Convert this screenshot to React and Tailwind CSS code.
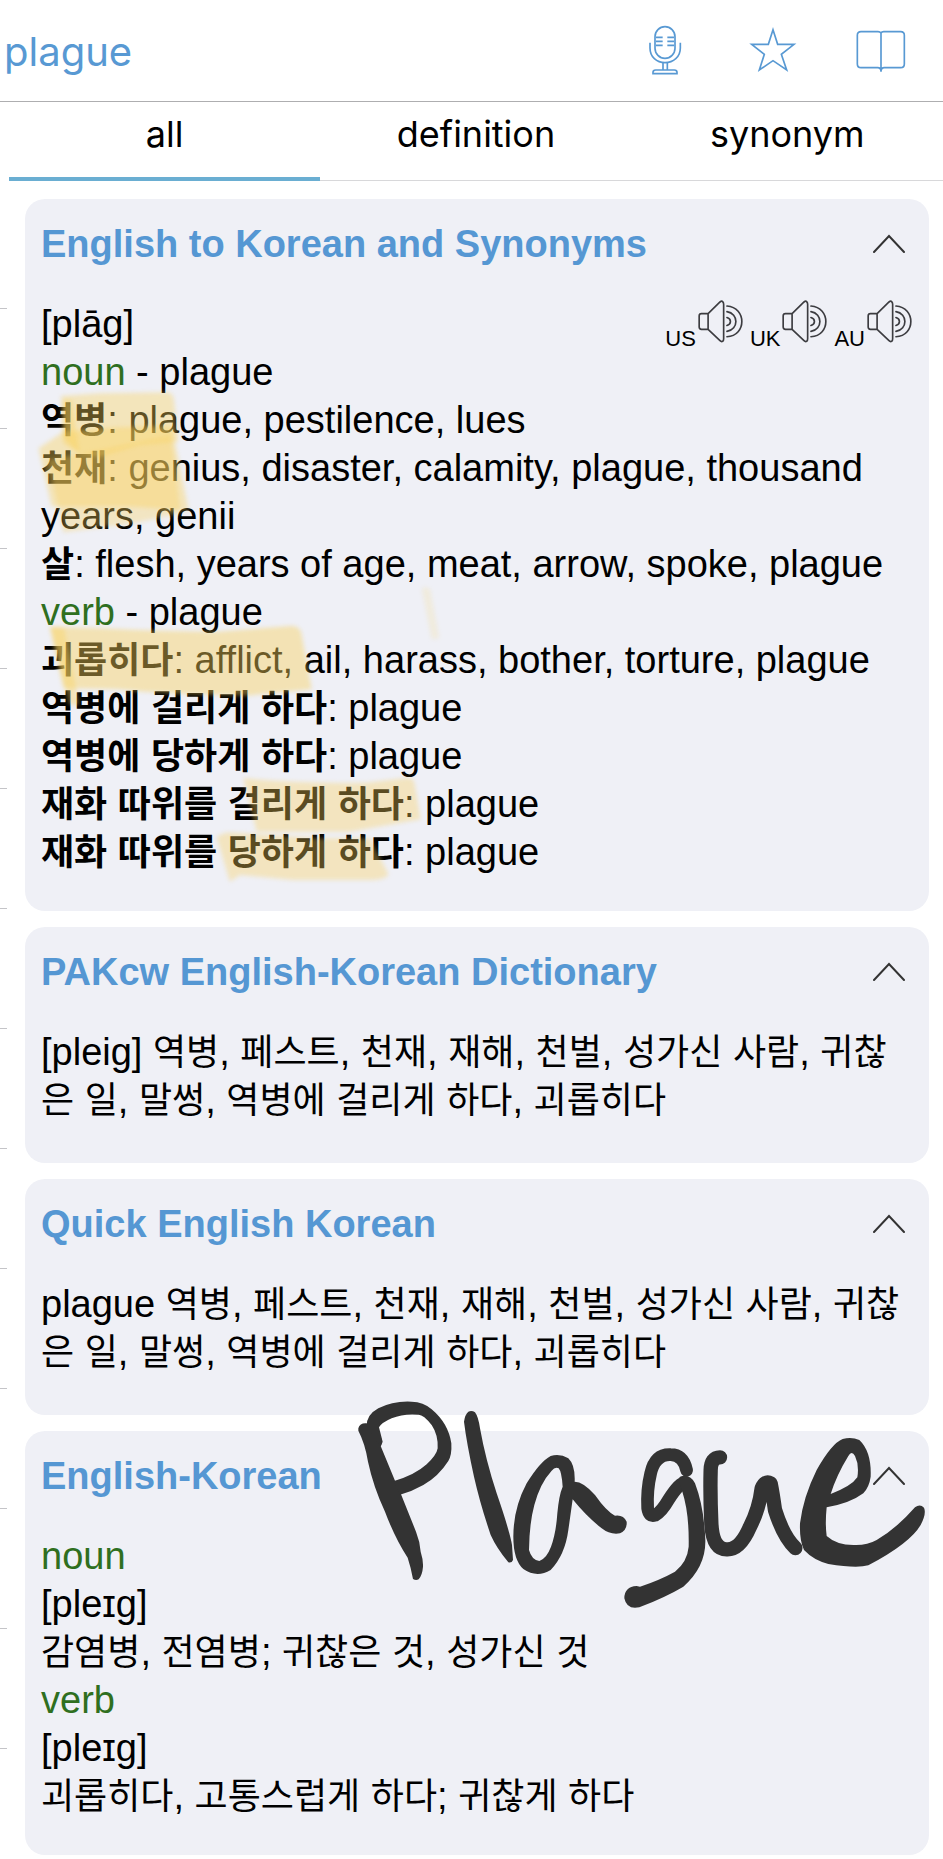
import React, { useState } from 'react';

const tabs = ['all', 'definition', 'synonym'];
const accents = ['US', 'UK', 'AU'];
const ticks = Array.from({ length: 13 }, (_, i) => i);

// Hangul runs get their own font so they sit evenly next to the latin text
function Mixed({ text }) {
  return text.split(/([\uAC00-\uD7A3]+)/).map((part, i) =>
    i % 2 === 1 ? (
      <span key={i} className="font-['Noto_Sans_CJK_KR',sans-serif] text-4xl leading-none">{part}</span>
    ) : (
      part
    )
  );
}

function Pos({ children }) {
  return <span className="text-[#2f6f1f]">{children}</span>;
}

function Entry({ word, children }) {
  return (
    <p>
      <span className="font-bold"><Mixed text={word} /></span>: {children}
    </p>
  );
}

function MicIcon() {
  return (
    <svg viewBox="504 74 150 150" className="w-[50px] h-[50px]" fill="none" stroke="#5899d3" strokeWidth="5">
      <rect x="549" y="79" width="60" height="95" rx="30" />
      <path d="M552 111h20M552 123h20M552 135h20M586 111h20M586 123h20M586 135h20" />
      <path d="M534 127v16c0 27 20 44 45 44s46-17 46-44v-16" />
      <path d="M573 187v22M586 187v22" />
      <path d="M543 220v-4q0-7 8-7h56q8 0 8 7v4z" />
    </svg>
  );
}

function StarIcon() {
  return (
    <svg viewBox="828 74 150 150" className="w-[50px] h-[50px]" fill="none" stroke="#5899d3" strokeWidth="5">
      <path d="M903 88L917 132L966 132L928 162L944 209L903 181L862 209L877 162L839 132L889 132Z" />
    </svg>
  );
}

function BookIcon() {
  return (
    <svg viewBox="1153 74 150 150" className="w-[50px] h-[50px]" fill="none" stroke="#5899d3" strokeWidth="5">
      <path d="M1228 98q-3-4-9-4h-51q-11 0-11 11v86q0 11 11 11h50q10 0 10 12q0-12 10-12h49q11 0 11-11v-86q0-11-11-11h-51q-6 0-8 4zV214" />
    </svg>
  );
}

function SpeakerIcon() {
  return (
    <svg viewBox="676 334 138 130" className="w-[46px] h-[43px]" fill="none" stroke="#3c3c40" strokeWidth="5" strokeLinecap="round">
      <path d="M706 375h-20q-7 0-7 7v34q0 7 7 7h20zM706 375l36-35q5-4 8-1q3 3 3 8v104q0 6-3 8q-4 2-8-2l-36-34" />
      <path d="M763 387c14 4 14 20 0 24M763 369c36 6 36 54 0 60M763 352c60 4 60 90 0 93" />
    </svg>
  );
}

// marker strokes laid over the first card
function Highlights() {
  return (
    <svg
      aria-hidden="true"
      viewBox="75 27 2712 2136"
      className="absolute left-0 top-0 w-[904px] h-[712px] pointer-events-none"
      fill="#f9d15d"
    >
      <defs>
        <filter id="soft" colorInterpolationFilters="sRGB">
          <feGaussianBlur stdDeviation="6" />
        </filter>
      </defs>
      <g filter="url(#soft)">
        <path fillOpacity=".38" d="M183 618L300 610L505 607Q522 612 523 640L535 755L420 765L300 800L235 790L190 740Z" />
        <path fillOpacity=".4" d="M190 630L215 630L238 790L190 760Z" />
        <path fillOpacity=".4" d="M116 775L190 725L350 712L515 708L566 962L400 950L155 950Z" />
        <path fillOpacity=".34" d="M145 810L300 780L512 735L542 970L400 1000L190 1027Z" />
        <path fillOpacity=".43" d="M150 1310L300 1315Q500 1325 650 1325L870 1308Q895 1306 903 1325L935 1498L740 1517Q480 1512 350 1498L190 1495Z" />
        <path fillOpacity=".4" d="M150 1310L192 1312L238 1545L208 1545Z" />
        <path fillOpacity=".16" d="M1265 1195Q1278 1190 1290 1196L1318 1345L1295 1348Z" />
        <path fillOpacity=".36" d="M730 1765Q900 1782 1100 1778L1225 1763Q1240 1765 1243 1778L1262 1888L1050 1925L770 1925Z" />
        <path fillOpacity=".36" d="M650 1942Q670 1925 700 1928L960 1945L1110 1945L1165 2052Q1160 2070 1100 2070L880 2070L720 2055L690 2075Z" />
      </g>
    </svg>
  );
}

// pen doodle running over the last two cards
function PenNote() {
  return (
    <svg
      role="img"
      aria-label="handwritten note"
      viewBox="30 45 1740 675"
      className="absolute left-[325px] -top-9 w-[580px] h-[225px] pointer-events-none"
      fill="#333"
    >
      <path d="M55 145Q60 128 80 130L122 170Q128 185 122 198L165 302L183 343L228 455Q240 485 242 515Q250 540 249 560Q247 585 236 598Q228 603 219 597Q212 560 203 533Q165 475 135 395Q100 320 84 245Q75 190 55 152Z" />
      <path d="M80 140Q78 105 115 85Q160 62 215 65Q250 65 275 88Q325 130 334 190Q336 225 325 243Q295 290 250 315Q215 335 180 344L160 304Q225 285 260 253Q290 225 293 205Q295 165 275 135Q250 103 235 104Q190 100 155 115Q125 128 117 142L128 185L122 200L80 140Z" />
      <path d="M372 125Q375 103 385 95Q395 90 405 97Q415 110 420 145Q437 240 470 340Q508 450 516 495L519 540Q515 550 505 547Q470 505 452 465Q420 370 402 290Q380 190 372 125Z" />
      <path
        fillRule="evenodd"
        d="M704 305Q706 255 685 235Q660 220 632 228Q600 245 560 310Q520 385 520 470Q520 540 550 567Q590 595 632 570Q675 525 685 450L698 358Q740 410 785 445Q810 465 840 460Q862 450 860 425Q850 403 825 407Q800 395 765 345Q730 305 704 305ZM668 320Q665 275 656 265Q645 260 635 272Q600 310 583 375Q568 430 567 510Q575 540 598 543Q620 535 633 500Q648 460 652 400Q657 345 668 320Z"
      />
      <g transform="translate(780 0)">
        <path
          fill="none"
          stroke="#333"
          strokeWidth="38"
          strokeLinecap="round"
          strokeLinejoin="round"
          d="M260 271Q250 224 212 224Q165 222 152 280Q140 330 143 385Q147 412 165 406Q185 395 205 360Q240 305 256 308"
        />
        <path d="M240 290Q270 280 285 310Q312 380 316 480Q318 560 250 620Q200 650 118 682Q80 690 73 655Q73 620 110 618L120 620Q180 600 225 575Q262 545 266 500Q268 400 247 335L235 300Z" />
        <path
          fill="none"
          stroke="#333"
          strokeWidth="43"
          strokeLinecap="round"
          strokeLinejoin="round"
          d="M360 232Q333 232 332 270Q330 340 334 430Q338 508 380 508Q420 510 450 440Q478 385 485 325Q495 300 512 310Q518 340 525 390Q550 470 586 504"
        />
        <path
          fillRule="evenodd"
          d="M680 382Q675 430 680 468Q710 495 760 495Q800 497 830 480Q890 445 945 382Q960 370 972 383Q980 400 962 435Q930 490 805 556Q770 566 685 552Q640 540 612 510Q598 480 600 430Q610 350 650 270Q695 190 728 177Q755 170 778 180Q815 215 812 290Q808 320 790 340Q750 370 680 382ZM692 342Q710 285 745 228Q755 210 765 228Q778 255 772 292Q755 318 692 342Z"
        />
      </g>
    </svg>
  );
}

function Card({ title, overlay, children }) {
  const [open, setOpen] = useState(true);

  return (
    <section className="relative bg-[#eff0f6] rounded-[20px] pl-4 pr-4 pt-[21px] pb-[35px]">
      <div className="flex items-center justify-between">
        <h2 className="font-bold text-[#5597d3]">{title}</h2>
        <button
          type="button"
          aria-label={"Toggle " + title}
          aria-expanded={open}
          onClick={() => setOpen(!open)}
          className="mr-2"
        >
          <svg viewBox="0 0 32 20" className="w-8 h-5" fill="none" stroke="#333" strokeWidth="2" strokeLinecap="round">
            <path d="M1 18L16 2L31 18" />
          </svg>
        </button>
      </div>
      {open && <div className="mt-8">{children}</div>}
      {overlay}
    </section>
  );
}

function App() {
  const [word, setWord] = useState('plague');
  const [active, setActive] = useState('all');

  return (
    <div className="min-h-screen bg-white text-black overflow-x-hidden font-['Liberation_Sans','Noto_Sans_CJK_KR',sans-serif] text-[38px] leading-[48px]">
      <header className="flex items-center h-[102px] border-b border-[#aeaeb0] pr-2 pb-0.5 font-['Inter',sans-serif]">
        <input
          type="text"
          aria-label="Search word"
          value={word}
          onChange={(e) => setWord(e.target.value)}
          className="flex-1 min-w-0 pl-1 pt-1 text-[40px] text-[#5899d3] bg-transparent outline-none"
        />
        <button type="button" aria-label="Voice search" className="w-[108px] flex justify-center"><MicIcon /></button>
        <button type="button" aria-label="Favorite" className="w-[108px] flex justify-center"><StarIcon /></button>
        <button type="button" aria-label="Dictionaries" className="w-[108px] flex justify-center"><BookIcon /></button>
      </header>

      <nav className="flex pl-[9px] font-['Inter',sans-serif]">
        {tabs.map((tab) => (
          <button
            key={tab}
            type="button"
            onClick={() => setActive(tab)}
            className={
              active === tab
                ? "flex-1 h-[79px] pb-3 text-[36px] border-b-4 border-[#6aaed2]"
                : "flex-1 h-[79px] pb-[15px] text-[36px] border-b border-[#d8d8da]"
            }
          >
            {tab}
          </button>
        ))}
      </nav>

      <div className="flex">
        <div aria-hidden="true" className="w-[7px] h-0 mt-2">
          {ticks.map((t) => (
            <div key={t} className="h-[120px] border-b border-[#c4c4c8]"></div>
          ))}
        </div>

        <main className="flex-1 min-w-0 pl-[18px] pr-[14px] pt-[18px] flex flex-col gap-4">
          <Card title="English to Korean and Synonyms" overlay={<Highlights />}>
            <div className="flex justify-between">
              <p>[plāg]</p>
              <div className="flex gap-1.5 items-start">
                {accents.map((accent) => (
                  <button key={accent} type="button" className="flex items-end gap-0.5 text-[22px] leading-6">
                    <span className="translate-y-2">{accent}</span>
                    <SpeakerIcon />
                  </button>
                ))}
              </div>
            </div>
            <p><Pos>noun</Pos> - plague</p>
            <Entry word="역병">plague, pestilence, lues</Entry>
            <Entry word="천재">genius, disaster, calamity, plague, thousand years, genii</Entry>
            <Entry word="살">flesh, years of age, meat, arrow, spoke, plague</Entry>
            <p><Pos>verb</Pos> - plague</p>
            <Entry word="괴롭히다">afflict, ail, harass, bother, torture, plague</Entry>
            <Entry word="역병에 걸리게 하다">plague</Entry>
            <Entry word="역병에 당하게 하다">plague</Entry>
            <Entry word="재화 따위를 걸리게 하다">plague</Entry>
            <Entry word="재화 따위를 당하게 하다">plague</Entry>
          </Card>

          <Card title="PAKcw English-Korean Dictionary">
            <p className="pb-1">
              <Mixed text="[pleig] 역병, 페스트, 천재, 재해, 천벌, 성가신 사람, 귀찮은 일, 말썽, 역병에 걸리게 하다, 괴롭히다" />
            </p>
          </Card>

          <Card title="Quick English Korean">
            <p className="pb-1">
              <Mixed text="plague 역병, 페스트, 천재, 재해, 천벌, 성가신 사람, 귀찮은 일, 말썽, 역병에 걸리게 하다, 괴롭히다" />
            </p>
          </Card>

          <Card title="English-Korean" overlay={<PenNote />}>
            <p><Pos>noun</Pos></p>
            <p>[pleɪg]</p>
            <p><Mixed text="감염병, 전염병; 귀찮은 것, 성가신 것" /></p>
            <p><Pos>verb</Pos></p>
            <p>[pleɪg]</p>
            <p><Mixed text="괴롭히다, 고통스럽게 하다; 귀찮게 하다" /></p>
          </Card>
        </main>
      </div>
    </div>
  );
}

export default App;
